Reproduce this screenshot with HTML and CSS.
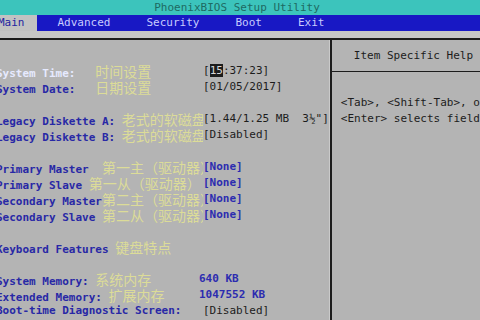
FILE: index.html
```html
<!DOCTYPE html>
<html lang="en">
<head>
    <meta charset="UTF-8">
    <meta name="viewport" content="width=device-width, initial-scale=1.0">
    <title>PhoenixBIOS Setup Utility</title>
    <link rel="stylesheet" href="styles.css">
</head>
<body>
    <div class="screen">
        <div class="title-bar">PhoenixBIOS Setup Utility</div>

        <div class="menu-bar">
            <span class="menu-item active">Main</span>
            <span class="menu-item">Advanced</span>
            <span class="menu-item">Security</span>
            <span class="menu-item">Boot</span>
            <span class="menu-item">Exit</span>
        </div>

        <div class="panel">
            <div class="settings">
                <div class="row">
                    <span class="label selected">System Time:   <span class="cn">时间设置</span></span>
                    <span class="value">[<span class="cursor">15</span>:37:23]</span>
                </div>
                <div class="row">
                    <span class="label">System Date:   <span class="cn">日期设置</span></span>
                    <span class="value">[01/05/2017]</span>
                </div>
                <div class="row blank"></div>
                <div class="row">
                    <span class="label">Legacy Diskette A: <span class="cn">老式的软磁盘</span></span>
                    <span class="value">[1.44/1.25 MB  3½"]</span>
                </div>
                <div class="row">
                    <span class="label">Legacy Diskette B: <span class="cn">老式的软磁盘</span></span>
                    <span class="value">[Disabled]</span>
                </div>
                <div class="row blank"></div>
                <div class="row">
                    <span class="label">Primary Master  <span class="cn">第一主（驱动器）</span></span>
                    <span class="value blue">[None]</span>
                </div>
                <div class="row">
                    <span class="label">Primary Slave <span class="cn">第一从（驱动器）</span></span>
                    <span class="value blue">[None]</span>
                </div>
                <div class="row">
                    <span class="label">Secondary Master<span class="cn">第二主（驱动器）</span></span>
                    <span class="value blue">[None]</span>
                </div>
                <div class="row">
                    <span class="label">Secondary Slave <span class="cn">第二从（驱动器）</span></span>
                    <span class="value blue">[None]</span>
                </div>
                <div class="row blank"></div>
                <div class="row">
                    <span class="label">Keyboard Features <span class="cn">键盘特点</span></span>
                </div>
                <div class="row blank"></div>
                <div class="row">
                    <span class="label">System Memory: <span class="cn">系统内存</span></span>
                    <span class="value blue info">640 KB</span>
                </div>
                <div class="row">
                    <span class="label">Extended Memory: <span class="cn">扩展内存</span></span>
                    <span class="value blue info">1047552 KB</span>
                </div>
                <div class="row">
                    <span class="label">Boot-time Diagnostic Screen:</span>
                    <span class="value">[Disabled]</span>
                </div>
            </div>

            <div class="help">
                <div class="help-title">Item Specific Help</div>
                <div class="help-text">&lt;Tab&gt;, &lt;Shift-Tab&gt;, or
&lt;Enter&gt; selects field.</div>
            </div>
        </div>
    </div>
</body>
</html>
```

FILE: styles.css
```css
* {
    margin: 0;
    padding: 0;
    box-sizing: border-box;
}

html, body {
    width: 480px;
    height: 320px;
    overflow: hidden;
    background: #b4b4b4;
}

.screen {
    font-family: "DejaVu Sans Mono", "Liberation Mono", monospace;
    font-size: 11px;
    color: #1c1c1c;
    height: 320px;
    display: flex;
    flex-direction: column;
}

.title-bar {
    height: 15px;
    line-height: 15px;
    background: #3cc4bc;
    color: #1e6a62;
    text-align: center;
    padding-right: 6px;
}

.menu-bar {
    height: 16px;
    line-height: 16px;
    background: #1818c4;
    color: #c8ccff;
    display: flex;
    margin-left: -10px;
}

.menu-item {
    padding: 0 18px;
    white-space: pre;
}

.menu-item.active {
    background: #c2c2c2;
    color: #2424a0;
    padding: 0 12px 0 8px;
    margin-right: 3px;
}

.panel {
    flex: 1;
    display: flex;
    margin-top: 7px;
    border-top: 2px solid #1c1c1c;
    background: #b4b4b4;
    box-shadow: 0 -7px 0 #c6c6c6;
}

.settings {
    width: 335px;
    padding-top: 23px;
    margin-left: -4px;
    border-right: 1px solid #cacaca;
}

.row {
    display: grid;
    grid-template-columns: 207px auto;
    height: 16px;
    line-height: 16px;
    white-space: pre;
}

.label {
    color: #2828a6;
    font-weight: bold;
    overflow: hidden;
}

.label.selected {
    color: #e6eaff;
}

.cn {
    font-family: "Noto Sans CJK SC", sans-serif;
    font-size: 14px;
    font-weight: normal;
    color: #dcdc98;
}

.value {
    color: #1c1c1c;
}

.value.blue {
    color: #2c2cb0;
    font-weight: bold;
}

.value.info {
    margin-left: -4px;
}

.cursor {
    background: #1c1c1c;
    color: #d8d8d8;
}

.help {
    flex: 1;
    border-left: 2px solid #1c1c1c;
}

.help-title {
    height: 32px;
    line-height: 32px;
    padding-left: 22px;
    border-bottom: 1px solid #1c1c1c;
    white-space: pre;
}

.help-text {
    padding: 23px 0 0 9px;
    line-height: 16px;
    white-space: pre;
}
```
